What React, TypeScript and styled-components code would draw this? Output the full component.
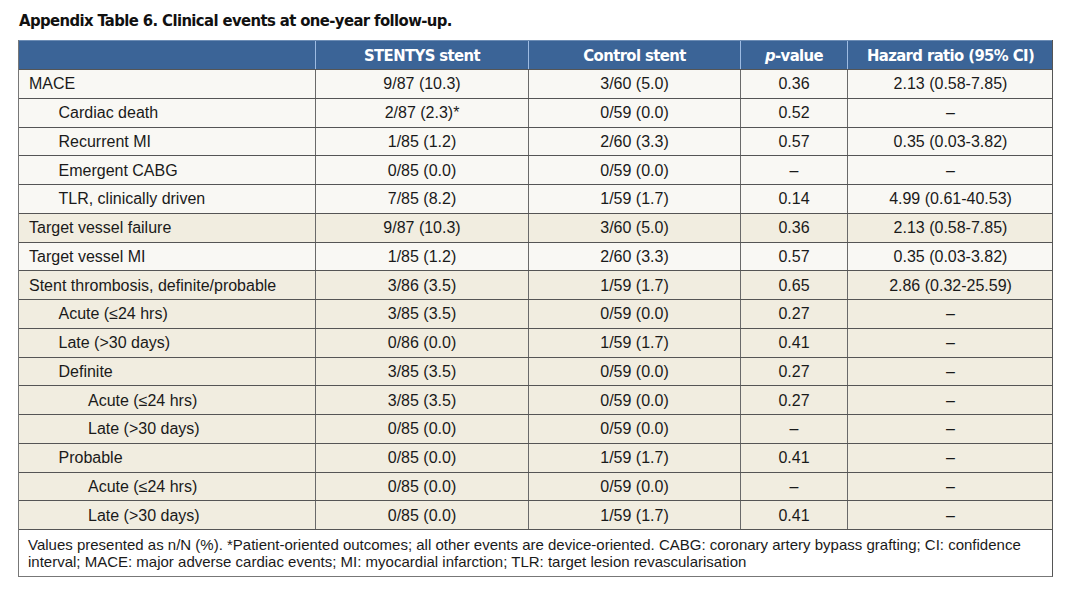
import styled, { createGlobalStyle } from "styled-components";

const GlobalStyle = createGlobalStyle`
  body {
    margin: 0;
    background: #fff;
    font-family: "Liberation Sans", Arial, sans-serif;
    color: #1a1a1a;
  }
`;

const Page = styled.div`
  padding: 11px 0 0 18px;
  width: 1035px;
`;

// 제목
const Title = styled.h1`
  margin: 0 0 9px 1px;
  font-family: "DejaVu Sans Condensed", "Liberation Sans", sans-serif;
  font-weight: bold;
  font-size: 16.5px;
  line-height: 20px;
  color: #111;
  letter-spacing: -0.6px;
`;

const Table = styled.div`
  border-left: 1px solid #777;
  border-right: 1px solid #555;
  border-bottom: 1px solid #777;
`;

const cols = "296px 213px 212px 107px 206px";

const HeaderRow = styled.div`
  display: grid;
  grid-template-columns: ${cols};
  height: 30px;
  background: #3b6497;
  border-top: 1px solid #6d8db5;
  border-bottom: 1px solid #555;
  box-sizing: border-box;
`;

const HeadCell = styled.div`
  display: flex;
  align-items: center;
  justify-content: center;
  color: #fff;
  font-family: "DejaVu Sans Condensed", "Liberation Sans", sans-serif;
  font-weight: bold;
  font-size: 16.5px;
  letter-spacing: -0.6px;
  border-left: 1px solid #9dbbe2;
  &:first-child {
    border-left: 0;
  }
  i {
    font-style: italic;
  }
`;

const Row = styled.div<{ $shade?: boolean }>`
  display: grid;
  grid-template-columns: ${cols};
  height: 28.75px;
  box-sizing: border-box;
  border-bottom: 1px solid #555;
  background: ${({ $shade }) => ($shade ? "#f1ede0" : "#f9f8f4")};
`;

const LabelCell = styled.div<{ $level: number }>`
  display: flex;
  align-items: center;
  padding: 1px 0 0 ${({ $level }) => 10 + $level * 29.5}px;
  font-size: 16px;
  white-space: nowrap;
`;

const ValueCell = styled.div`
  display: flex;
  align-items: center;
  justify-content: center;
  padding-top: 1px;
  font-size: 16px;
  border-left: 1px solid #6a6a6a;
  white-space: nowrap;
`;

const Footnote = styled.div`
  background: #fff;
  padding: 6px 8px 6px 9px;
  font-size: 15px;
  line-height: 17px;
  color: #1a1a1a;
  white-space: nowrap;
`;

interface EventRow {
  label: string;
  level: number;
  stentys: string;
  control: string;
  p: string;
  hr: string;
  shade?: boolean;
}

const rows: EventRow[] = [
  { label: "MACE", level: 0, stentys: "9/87 (10.3)", control: "3/60 (5.0)", p: "0.36", hr: "2.13 (0.58-7.85)" },
  { label: "Cardiac death", level: 1, stentys: "2/87 (2.3)*", control: "0/59 (0.0)", p: "0.52", hr: "–" },
  { label: "Recurrent MI", level: 1, stentys: "1/85 (1.2)", control: "2/60 (3.3)", p: "0.57", hr: "0.35 (0.03-3.82)" },
  { label: "Emergent CABG", level: 1, stentys: "0/85 (0.0)", control: "0/59 (0.0)", p: "–", hr: "–" },
  { label: "TLR, clinically driven", level: 1, stentys: "7/85 (8.2)", control: "1/59 (1.7)", p: "0.14", hr: "4.99 (0.61-40.53)" },
  { label: "Target vessel failure", level: 0, stentys: "9/87 (10.3)", control: "3/60 (5.0)", p: "0.36", hr: "2.13 (0.58-7.85)", shade: true },
  { label: "Target vessel MI", level: 0, stentys: "1/85 (1.2)", control: "2/60 (3.3)", p: "0.57", hr: "0.35 (0.03-3.82)" },
  { label: "Stent thrombosis, definite/probable", level: 0, stentys: "3/86 (3.5)", control: "1/59 (1.7)", p: "0.65", hr: "2.86 (0.32-25.59)", shade: true },
  { label: "Acute (≤24 hrs)", level: 1, stentys: "3/85 (3.5)", control: "0/59 (0.0)", p: "0.27", hr: "–", shade: true },
  { label: "Late (>30 days)", level: 1, stentys: "0/86 (0.0)", control: "1/59 (1.7)", p: "0.41", hr: "–", shade: true },
  { label: "Definite", level: 1, stentys: "3/85 (3.5)", control: "0/59 (0.0)", p: "0.27", hr: "–", shade: true },
  { label: "Acute (≤24 hrs)", level: 2, stentys: "3/85 (3.5)", control: "0/59 (0.0)", p: "0.27", hr: "–", shade: true },
  { label: "Late (>30 days)", level: 2, stentys: "0/85 (0.0)", control: "0/59 (0.0)", p: "–", hr: "–", shade: true },
  { label: "Probable", level: 1, stentys: "0/85 (0.0)", control: "1/59 (1.7)", p: "0.41", hr: "–", shade: true },
  { label: "Acute (≤24 hrs)", level: 2, stentys: "0/85 (0.0)", control: "0/59 (0.0)", p: "–", hr: "–", shade: true },
  { label: "Late (>30 days)", level: 2, stentys: "0/85 (0.0)", control: "1/59 (1.7)", p: "0.41", hr: "–", shade: true },
];

const App = () => {
  return (
    <>
      <GlobalStyle />
      <Page>
        <Title>Appendix Table 6. Clinical events at one-year follow-up.</Title>
        <Table>
          <HeaderRow>
            <HeadCell />
            <HeadCell>STENTYS stent</HeadCell>
            <HeadCell>Control stent</HeadCell>
            <HeadCell>
              <i>p</i>-value
            </HeadCell>
            <HeadCell>Hazard ratio (95% CI)</HeadCell>
          </HeaderRow>

          {rows.map((r, i) => (
            <Row key={i} $shade={r.shade}>
              <LabelCell $level={r.level}>{r.label}</LabelCell>
              <ValueCell>{r.stentys}</ValueCell>
              <ValueCell>{r.control}</ValueCell>
              <ValueCell>{r.p}</ValueCell>
              <ValueCell>{r.hr}</ValueCell>
            </Row>
          ))}

          {/* 각주 */}
          <Footnote>
            Values presented as n/N (%). *Patient-oriented outcomes; all other events are device-oriented. CABG: coronary artery bypass grafting; CI: confidence
            <br />
            interval; MACE: major adverse cardiac events; MI: myocardial infarction; TLR: target lesion revascularisation
          </Footnote>
        </Table>
      </Page>
    </>
  );
};

export default App;
